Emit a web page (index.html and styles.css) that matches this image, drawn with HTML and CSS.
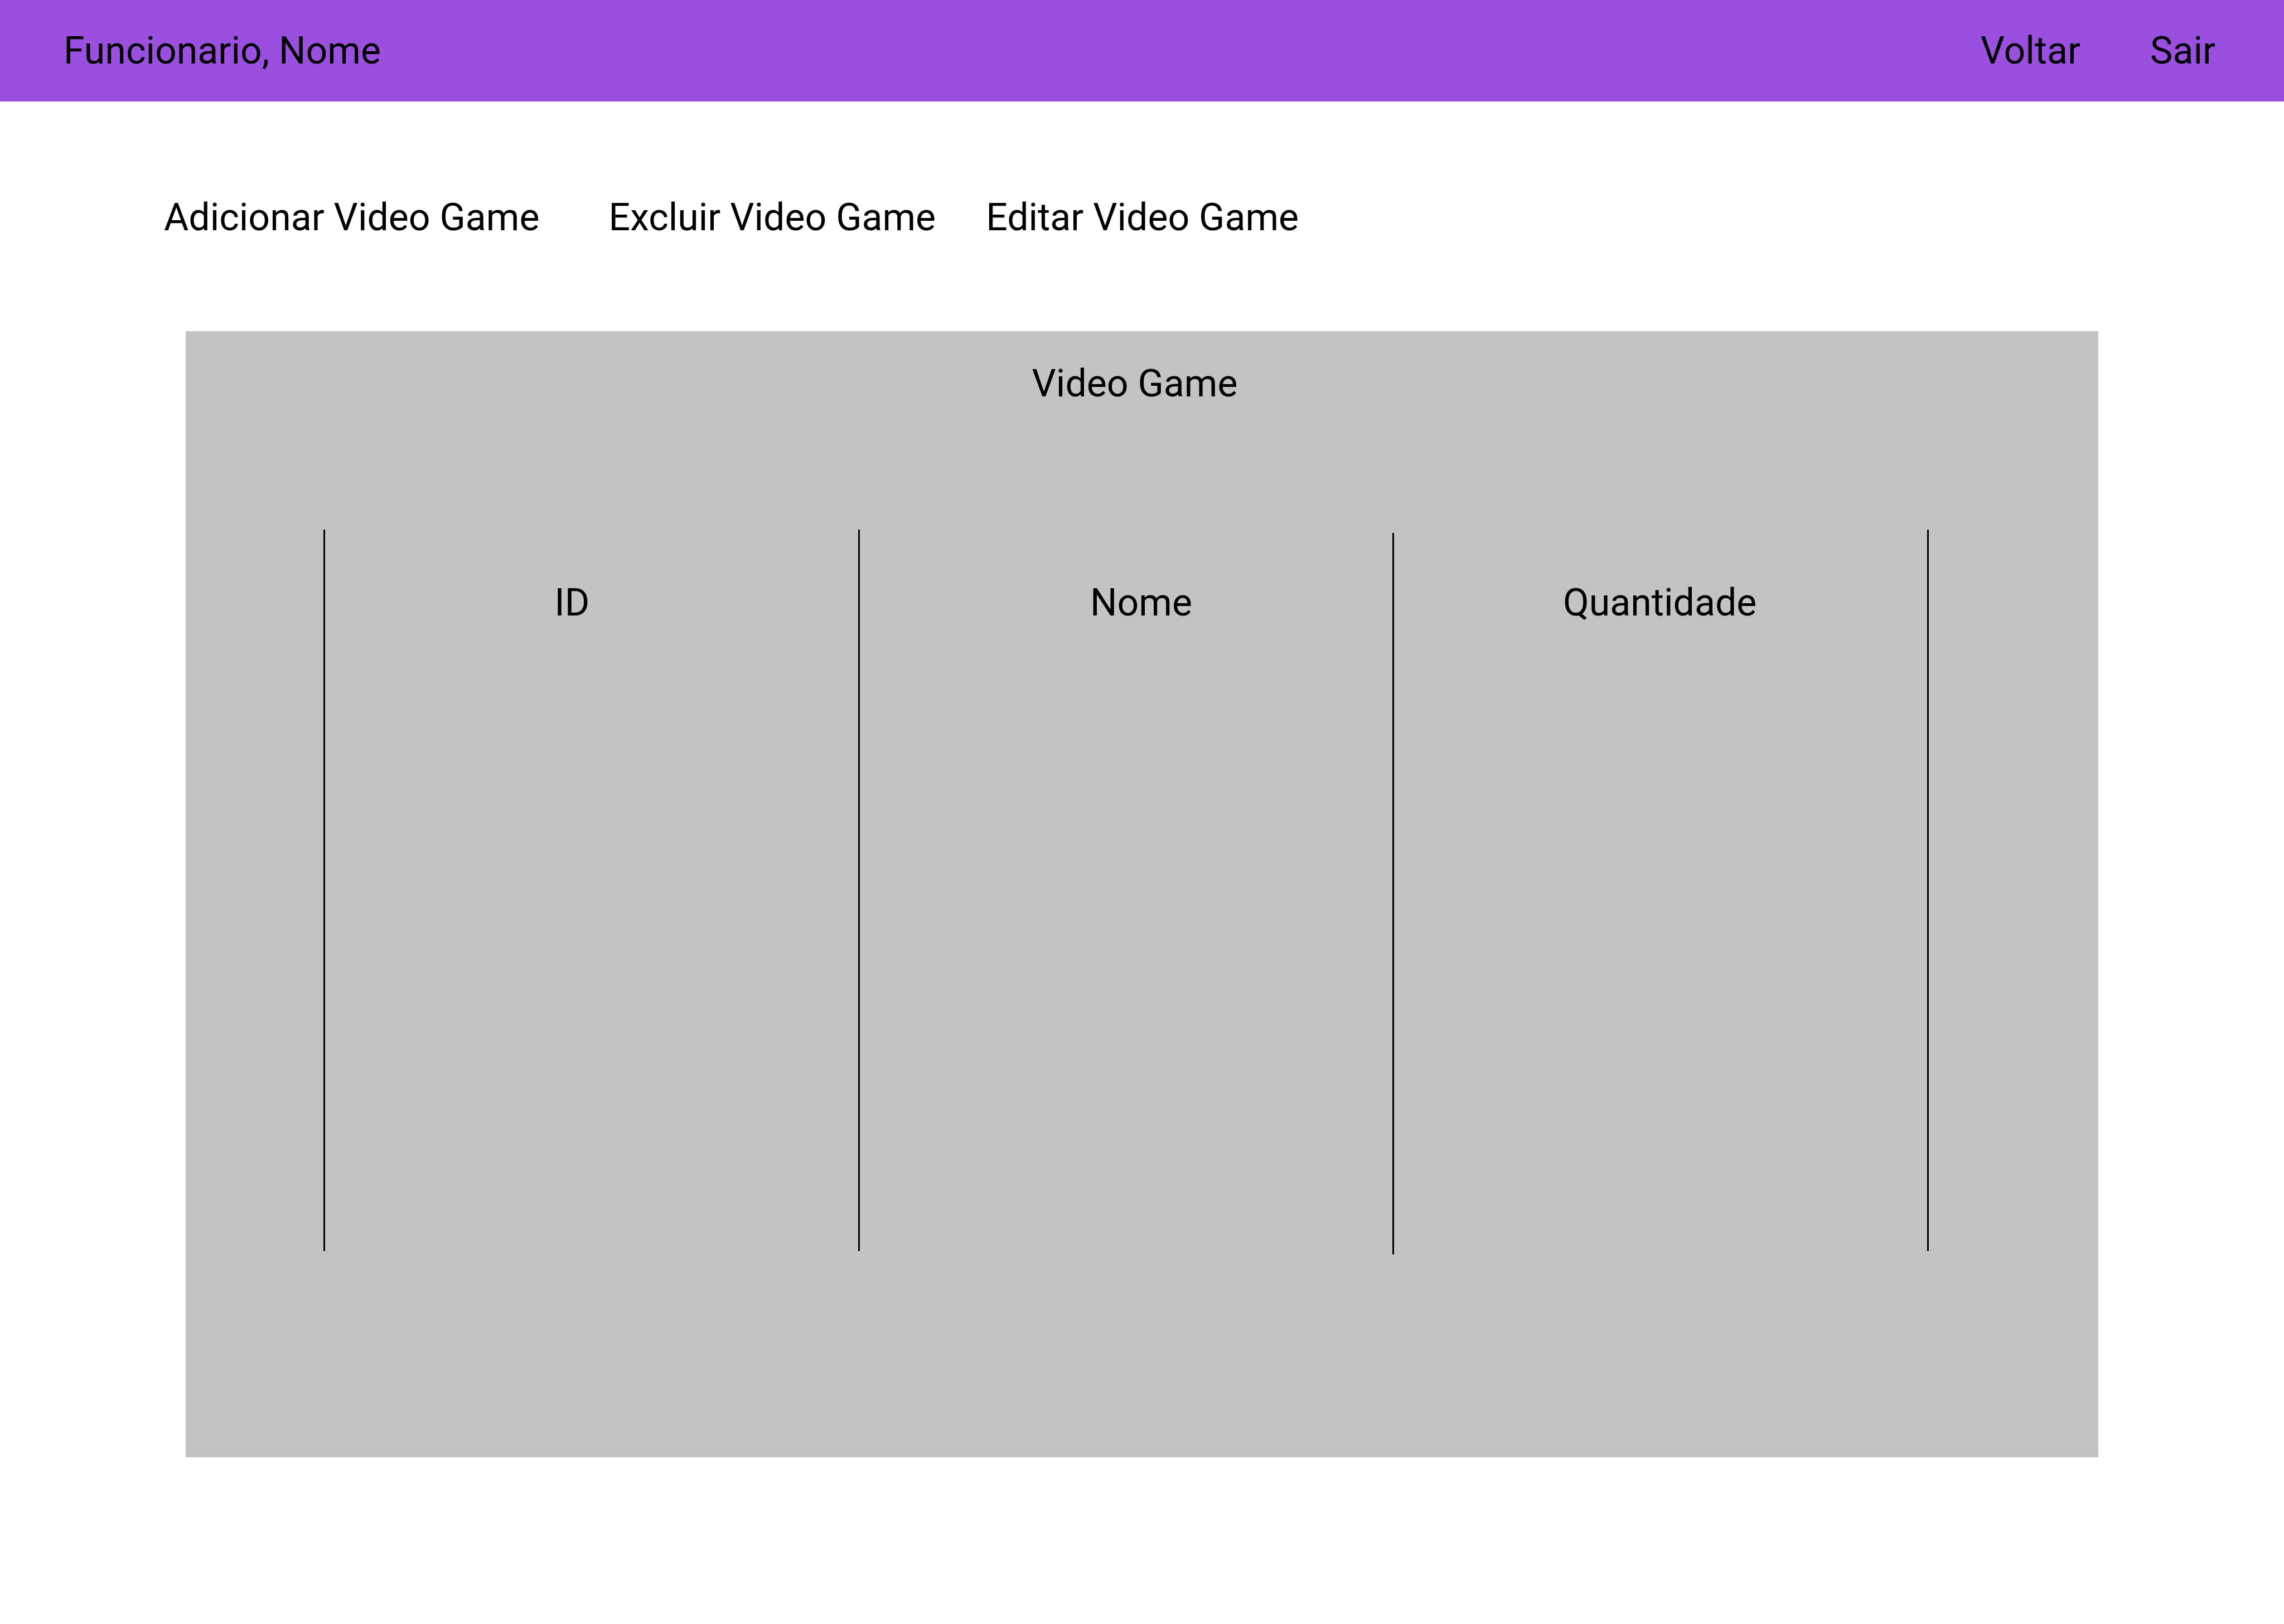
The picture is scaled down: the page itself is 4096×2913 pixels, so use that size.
FILE: index.html
```html
<!DOCTYPE html>
<html lang="pt-BR">
<head>
  <meta charset="utf-8">
  <meta name="viewport" content="width=device-width, initial-scale=1">
  <title>Video Game</title>
  <link rel="stylesheet" href="styles.css">
</head>
<body>
  <header class="topbar">
    <span class="topbar-user">Funcionario, Nome</span>
    <nav class="topbar-links">
      <a href="#voltar">Voltar</a>
      <a href="#sair">Sair</a>
    </nav>
  </header>
  <main>
    <nav class="actions">
      <a class="action-add" href="#adicionar">Adicionar Video Game</a>
      <a class="action-delete" href="#excluir">Excluir Video Game</a>
      <a href="#editar">Editar Video Game</a>
    </nav>
    <section class="panel">
      <h1 class="panel-title">Video Game</h1>
      <table class="games">
        <thead>
          <tr>
            <th class="col-id" scope="col">ID</th>
            <th class="col-name" scope="col">Nome</th>
            <th class="col-amount" scope="col">Quantidade</th>
          </tr>
        </thead>
        <tbody>
          <tr>
            <td class="col-id"></td>
            <td class="col-name"></td>
            <td class="col-amount"></td>
          </tr>
        </tbody>
      </table>
    </section>
  </main>
</body>
</html>
```
FILE: styles.css
```css
* {
  box-sizing: border-box;
}

body {
  margin: 0;
  background: #fff;
  color: #000;
  font-family: Roboto, "Liberation Sans", sans-serif;
  font-size: 68px;
  line-height: 80px;
}

a {
  color: inherit;
  text-decoration: none;
}

.topbar {
  display: flex;
  align-items: center;
  justify-content: space-between;
  padding: 51px 123px 51px 114px;
  background: #9a4fde;
}

.topbar-links {
  display: flex;
  gap: 125px;
}

.actions {
  display: flex;
  padding: 168px 294px 164px;
}

.action-add {
  margin-right: 124px;
}

.action-delete {
  margin-right: 90px;
}

.panel {
  margin: 0 333px;
  padding: 54px 304px 364px 247px;
  background: #c3c3c3;
}

.panel-title {
  margin: 0 0 222px;
  padding-left: 31px;
  font-size: 68px;
  font-weight: 400;
  text-align: center;
}

/* Column rules are painted as cell backgrounds; the third one hangs 6px lower. */
.games {
  width: 100%;
  table-layout: fixed;
  border-spacing: 0;
  border-collapse: separate;
}

.games th {
  height: 240px;
  padding: 91px 0 0;
  font-weight: 400;
  text-align: center;
  vertical-align: top;
}

.games td {
  height: 1060px;
  padding: 0;
}

.games .col-id,
.games .col-name {
  width: 33.3%;
  background: linear-gradient(#000, #000) left top / 3px 100% no-repeat;
}

.games th.col-id {
  padding-right: 67px;
}

.games th.col-name {
  padding-left: 57px;
}

.games td.col-id,
.games td.col-name {
  background-size: 3px calc(100% - 6px);
}

.games th.col-amount {
  padding-right: 3px;
  background:
    linear-gradient(#000, #000) left bottom / 3px calc(100% - 6px) no-repeat,
    linear-gradient(#000, #000) right top / 3px 100% no-repeat;
}

.games td.col-amount {
  background:
    linear-gradient(#000, #000) left top / 3px 100% no-repeat,
    linear-gradient(#000, #000) right top / 3px calc(100% - 6px) no-repeat;
}
```
